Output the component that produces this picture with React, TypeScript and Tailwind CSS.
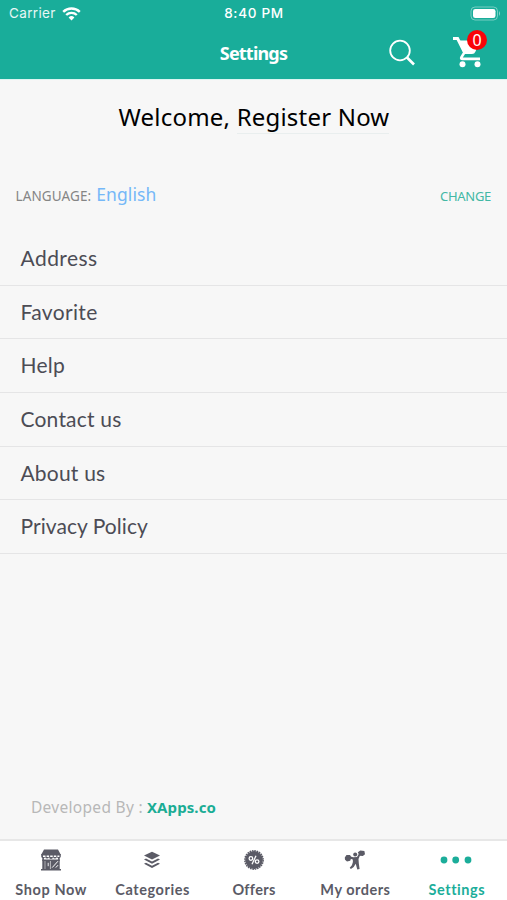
import type { ReactNode } from "react";

const rows: { label: string; tracking: string }[] = [
  { label: "Address", tracking: "tracking-[0.45px]" },
  { label: "Favorite", tracking: "tracking-[0.35px]" },
  { label: "Help", tracking: "tracking-[0.25px]" },
  { label: "Contact us", tracking: "tracking-[0.2px]" },
  { label: "About us", tracking: "tracking-[0.2px]" },
  { label: "Privacy Policy", tracking: "tracking-[0.05px]" },
];

function ShopIcon() {
  return (
    <svg width="22" height="22" viewBox="0 0 22 22" fill="currentColor">
      <path d="M4 0.5h14l2.8 5.2H1.2z" />
      <path d="M1.2 5h19.6v2.6a2 2 0 0 1-3.9 0.3a2 2 0 0 1-3.9 0a2 2 0 0 1-4 0a2 2 0 0 1-3.9 0a2 2 0 0 1-3.9-0.3z" />
      <path d="M2.3 10.6h17.4v9.4H21v1.4H1V20h1.3z" />
      <path d="M2.3 8h1.6v4H2.3zM18.1 8h1.6v4h-1.6z" />
      <g stroke="#fff" fill="none">
        <path d="M3 7.3h16.4" strokeDasharray="2.5 1.1" strokeWidth="1.4" />
        <path d="M5 12v8" strokeWidth="0.5" />
        <path d="M8.2 13.8v3.4" strokeWidth="0.9" />
        <path d="M10.4 12v8" strokeWidth="0.6" />
        <path d="M12.2 18.6l5.8-6.4M15.8 18.6l2.2-2.4" strokeWidth="1" />
      </g>
    </svg>
  );
}

function LayersIcon() {
  return (
    <svg width="18" height="18" viewBox="0 0 18 18" fill="currentColor">
      <path d="M9 0.8L17 4.6L9 8.5L1 4.6z" />
      <path d="M1 8.6l2-1L9 10.5l6-2.9l2 1L9 12.7z" />
      <path d="M1 12.8l2-1L9 14.7l6-2.9l2 1L9 17z" />
    </svg>
  );
}

function OffersIcon() {
  return (
    <svg width="20" height="20" viewBox="0 0 20 20" fill="none">
      <circle cx="10" cy="10" r="8.9" fill="currentColor" />
      <circle cx="10" cy="10" r="9.2" stroke="currentColor" strokeWidth="1.4" strokeDasharray="1.6 0.809" />
      <g stroke="#fff" strokeWidth="1.3">
        <circle cx="6.9" cy="8.5" r="1.8" />
        <circle cx="13.1" cy="11.6" r="1.8" />
        <path d="M12 5.8L8 14.2" />
      </g>
    </svg>
  );
}

function OrdersIcon() {
  return (
    <svg width="22" height="20" viewBox="0 0 22 20" fill="currentColor">
      <circle cx="11.2" cy="4.4" r="2" />
      <path d="M0.8 7.5l1.7-2.5l3.5-0.1l1.5 2.5l-1.3 3.4l-3.2 0.6l-2-1.7z" />
      <path d="M13.8 2.3l2.6-1.9l4 0.7l0.6 3.2l-2.2 1.8l-3.2-0.4z" />
      <path d="M6.5 6.6l2.7 0.7l3.8-0.2l1.9-3.4l1.5 0.7l-1.9 4.7l0.3 4.2l0.8 5.6l-2.3 0.5l-1.6-5.6l-2 3.3l-2.8 2l-1.2-1.3l2.2-2.5l1-3.2l-0.1-2.5l-3-1z" />
    </svg>
  );
}

function MoreIcon() {
  return (
    <svg width="32" height="8" viewBox="0 0 32 8" fill="currentColor">
      <circle cx="4" cy="4" r="3.4" />
      <circle cx="15.7" cy="4" r="3.4" />
      <circle cx="28" cy="4" r="3.4" />
    </svg>
  );
}

const tabs: { label: string; icon: ReactNode; tracking: string; active?: boolean }[] = [
  { label: "Shop Now", icon: <ShopIcon />, tracking: "tracking-[0.6px]" },
  { label: "Categories", icon: <LayersIcon />, tracking: "tracking-[0.55px]" },
  { label: "Offers", icon: <OffersIcon />, tracking: "tracking-[0.3px]" },
  { label: "My orders", icon: <OrdersIcon />, tracking: "tracking-[0.5px]" },
  { label: "Settings", icon: <MoreIcon />, tracking: "tracking-[0.55px]", active: true },
];

function StatusBar() {
  return (
    <div className="grid h-[27px] grid-cols-3 items-center pl-[9px] pr-[6px] font-['Inter',sans-serif] text-[13.5px] leading-none text-white">
      <div className="flex items-center gap-[6px]">
        <span className="text-[13.5px] tracking-[0.35px] text-white/90">Carrier</span>
        <svg width="19" height="14" viewBox="0 0 19 14" fill="none" stroke="#fff" strokeWidth="2.4">
          <path d="M1.2 4.9a12 12 0 0 1 16.6 0" />
          <path d="M4.2 8a7.6 7.6 0 0 1 10.6 0" />
          <path d="M6.6 10.4a4.2 4.2 0 0 1 5.8 0L9.5 13.5z" fill="#fff" stroke="none" />
        </svg>
      </div>
      <span className="-ml-[2px] text-center font-medium tracking-[0.7px]">8:40 PM</span>
      <svg className="justify-self-end" width="31" height="15" viewBox="0 0 31 15">
        <rect x="1" y="1" width="26.5" height="13" rx="4" fill="none" stroke="#fff" strokeOpacity=".4" />
        <rect x="3" y="3" width="22.5" height="9" rx="2.3" fill="#fff" />
        <path d="M29 5v5q2-2.5 0-5" fill="#fff" fillOpacity=".5" />
      </svg>
    </div>
  );
}

export default function App() {
  return (
    <div className="flex h-[900px] w-[507px] flex-col overflow-hidden bg-[#f7f7f7] font-['Noto_Sans',sans-serif]">
      <header className="h-[79px] shrink-0 bg-[#19ad9a]">
        <StatusBar />
        <div className="grid h-[52px] grid-cols-3 items-center pb-px">
          <span />
          <h1 className="text-center text-[18px] font-bold leading-none tracking-[-0.8px] text-white">Settings</h1>
          <div className="flex items-center justify-end gap-[36px] pr-[22px]">
            <svg width="28" height="28" viewBox="0 0 28 28" fill="none" stroke="#fff">
              <circle cx="12" cy="11.5" r="9.8" strokeWidth="1.8" />
              <path d="M19 18.5l7 7" strokeWidth="2.6" />
            </svg>
            <div className="relative">
              <svg width="33" height="33" viewBox="0 0 33 33" fill="none" stroke="#fff">
                <path d="M1 2.5h4.6l7.5 15" strokeWidth="3" />
                <path d="M6 4.5h22l-4.5 11q-1 2.5-3.5 2.5h-8z" fill="#fff" stroke="none" />
                <path d="M12.4 16.5l-3 4.8q-.8 1.6 1 1.6H28" strokeWidth="2.6" />
                <circle cx="10.5" cy="28.3" r="3" fill="#fff" stroke="none" />
                <circle cx="25.5" cy="28.3" r="3" fill="#fff" stroke="none" />
              </svg>
              <span className="absolute -top-[6px] left-[15px] flex size-[20px] items-center justify-center rounded-full bg-[#f90408] text-[16px] leading-none text-white">0</span>
            </div>
          </div>
        </div>
      </header>

      <main className="flex min-h-0 flex-1 flex-col border-t border-[#dcf5f2]">
        <div className="flex h-[54px] items-end justify-center pl-px text-[24px] leading-[34px] text-black">
          <span className="whitespace-pre tracking-[0.2px]">Welcome, </span>
          <span className="border-b border-[#e9eeee] leading-[32px] tracking-[0.2px]">Register Now</span>
        </div>

        <div className="mt-[44px] flex h-[32px] items-baseline justify-between pl-[15.5px] pr-[16px] leading-[32px]">
          <div className="flex items-baseline gap-[5px]">
            <span className="text-[13.5px] tracking-[0.1px] text-[#858585]">LANGUAGE:</span>
            <span className="text-[17.5px] tracking-[0.1px] text-[#75b8f8]">English</span>
          </div>
          <button className="text-[13px] tracking-[-0.3px] text-[#42b8a5]">CHANGE</button>
        </div>

        <ul className="mt-[22px] flex h-[322px] flex-col font-['Lato',sans-serif] text-[21px] text-[#4c4c55]">
          {rows.map((row) => (
            <li key={row.label} className={"flex flex-1 items-center border-b-[1.5px] border-[#e5e5e6] pb-px pl-[20.5px] " + row.tracking}>
              {row.label}
            </li>
          ))}
        </ul>

        <p className="mb-[20px] mt-auto flex items-baseline gap-[4px] pl-[31px] text-[15.5px] leading-[24px] text-[#b8b8b8]">
          <span className="tracking-[0.3px]">Developed By :</span>
          <span className="text-[15px] font-bold tracking-[0.1px] text-[#1bad95]">XApps.co</span>
        </p>
      </main>

      <nav className="flex h-[61px] shrink-0 border-t-2 border-[#e7e7e7] bg-white font-['Lato',sans-serif] text-[14.5px] font-bold text-[#5b5b66]">
        {tabs.map((tab) => (
          <div key={tab.label} className={"flex flex-1 flex-col items-center " + (tab.active ? "text-[#1bad9a]" : "")}>
            <div className="flex h-[38px] items-center">{tab.icon}</div>
            <span className={"mt-px whitespace-nowrap pl-px leading-[21px] " + tab.tracking}>{tab.label}</span>
          </div>
        ))}
      </nav>
    </div>
  );
}
